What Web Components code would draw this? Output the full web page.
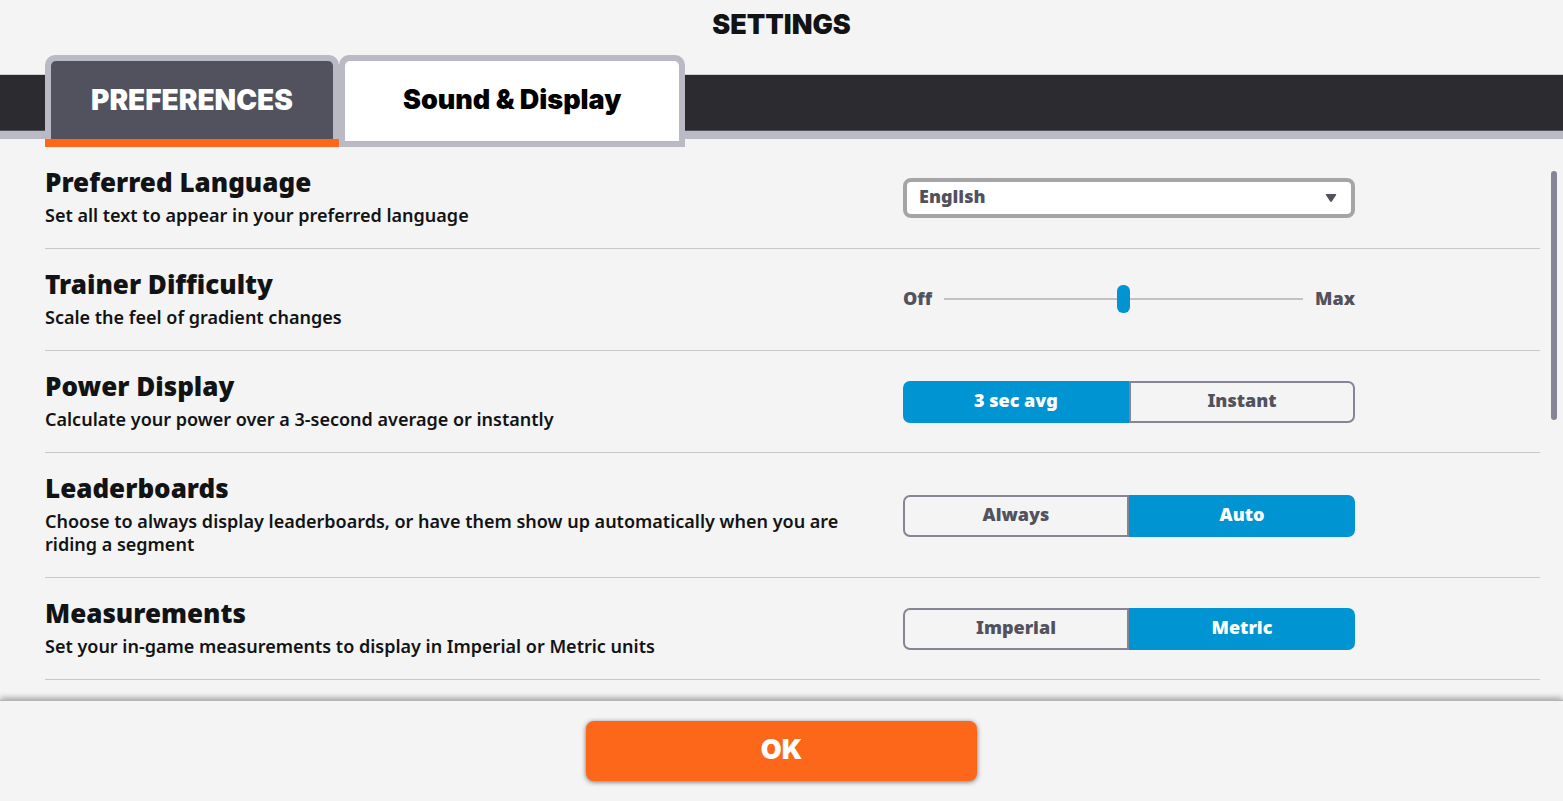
<!DOCTYPE html>
<html lang="en">
<head>
<meta charset="utf-8">
<title>Settings</title>
<style>
  :root {
    --surface: #f4f4f4; --ink: #121314; --slate: #52525e; --muted: #858595;
    --lavender: #babac5; --dark: #2c2b30; --orange: #fc6719; --blue: #0094d3; --rule: #c8c8c8;
    --display: Inter, "Noto Sans", sans-serif;
  }
  body { margin: 0; font-family: "Noto Sans", "Open Sans", sans-serif; color: var(--ink); background: var(--surface); }
</style>
</head>
<body>
<settings-page>
  <tab-bar slot="tabs">
    <tab-item selected>PREFERENCES</tab-item>
    <tab-item>Sound &amp; Display</tab-item>
  </tab-bar>
  <setting-row heading="Preferred Language" detail="Set all text to appear in your preferred language">
    <select-box label="Preferred Language" options="English,Français,Deutsch,Español"></select-box>
  </setting-row>
  <setting-row heading="Trainer Difficulty" detail="Scale the feel of gradient changes">
    <range-slider label="Trainer Difficulty" low="Off" high="Max"></range-slider>
  </setting-row>
  <setting-row heading="Power Display" detail="Calculate your power over a 3-second average or instantly">
    <segmented-control label="Power Display" options="3 sec avg,Instant" selected="0"></segmented-control>
  </setting-row>
  <setting-row heading="Leaderboards" detail="Choose to always display leaderboards, or have them show up automatically when you are riding a segment">
    <segmented-control label="Leaderboards" options="Always,Auto" selected="1"></segmented-control>
  </setting-row>
  <setting-row heading="Measurements" detail="Set your in-game measurements to display in Imperial or Metric units">
    <segmented-control label="Measurements" options="Imperial,Metric" selected="1"></segmented-control>
  </setting-row>
  <action-button slot="footer">OK</action-button>
</settings-page>

<script>
class BaseElement extends HTMLElement {
  connectedCallback() {
    if (this.shadowRoot) return;
    this.attachShadow({ mode: "open" }).innerHTML =
      `<style>*{box-sizing:border-box}${this.constructor.styles}</style>${this.render()}`;
    this.ready();
  }
  attr(name) { return this.getAttribute(name) || ""; }
  ready() {}
}

customElements.define("settings-page", class extends BaseElement {
  static styles = `
    :host { display: flex; flex-direction: column; height: 100vh; }
    h1 { margin: 0; height: 55px; font: 900 27px/50px var(--display); text-align: center; }
    main { flex: 1; min-height: 0; display: flex; }
    .list { flex: 1; padding-left: 45px; overflow-y: auto; scrollbar-width: none; }
    .rail { width: 23px; padding: 24px 6px 0 11px; }
    .thumb { height: 47%; border-radius: 3px; background: var(--muted); }
    footer { display: flex; justify-content: center; padding: 20px 0; z-index: 1;
      background: var(--surface); border-top: 1px solid #b4b4b4; box-shadow: 0 -2px 6px rgba(0,0,0,.35); }
    ::slotted([slot=footer]) { width: 25%; }
  `;
  render() {
    return `<h1>SETTINGS</h1><slot name="tabs"></slot>
      <main><div class="list"><slot></slot></div><div class="rail"><div class="thumb"></div></div></main>
      <footer><slot name="footer"></slot></footer>`;
  }
});

customElements.define("tab-bar", class extends BaseElement {
  static styles = `
    :host { display: block; }
    nav { display: flex; height: 92px; padding-left: 45px;
      background: linear-gradient(transparent 19px, #d0d0d2 19px 20px, var(--dark) 20px 75px, #52525e 75px 76px, var(--lavender) 76px 84px, transparent 84px); }
  `;
  render() { return `<nav role="tablist"><slot></slot></nav>`; }
});

customElements.define("tab-item", class extends BaseElement {
  static styles = `
    :host { display: flex; }
    button { display: flex; margin: 0; padding: 6px; border: 0; border-radius: 10px 10px 0 0;
      background: var(--lavender); font: 900 27px/32px var(--display); color: #000; }
    span { display: flex; align-items: center; padding: 0 58px 2px; border-radius: 5px 5px 0 0; background: #fff; }
    :host([selected]) button { padding-bottom: 0; border-bottom: 8px solid var(--orange); font-size: 28px; color: #fff; }
    :host([selected]) span { padding: 0 40px; background: var(--slate); }
  `;
  render() {
    return `<button role="tab" aria-selected="${this.hasAttribute("selected")}"><span><slot></slot></span></button>`;
  }
});

customElements.define("setting-row", class extends BaseElement {
  static styles = `
    :host { display: grid; grid-template-columns: 858fr 452fr 185fr; align-items: center;
      padding: 22px 0 21px; border-bottom: 1px solid var(--rule); }
    .text { padding-right: 20px; }
    h2 { margin: 0 0 9px; font-size: 26px; line-height: 26px; font-weight: 900; }
    p { margin: 0; font-size: 18px; line-height: 23px; font-weight: 600; }
  `;
  render() {
    return `<div class="text"><h2>${this.attr("heading")}</h2><p>${this.attr("detail")}</p></div><slot></slot>`;
  }
});

customElements.define("select-box", class extends BaseElement {
  static styles = `
    :host { display: grid; align-items: center; }
    select, svg { grid-area: 1 / 1; }
    select { appearance: none; width: 100%; height: 40px; margin: 0; padding: 0 12px 5px; border: 4px solid #a5a5a7;
      border-radius: 8px; background: #fff; color: var(--slate); font: 900 18px/24px "Noto Sans", sans-serif; }
    svg { justify-self: end; margin-right: 18px; pointer-events: none; }
  `;
  render() {
    return `<select aria-label="${this.attr("label")}">${this.attr("options").split(",").map(o => `<option>${o}</option>`).join("")}</select>
      <svg width="12" height="10" viewBox="0 0 12 10"><path d="M1.4 1h9.2q1 0 .5 1L7 8.3q-1 1.2-2 0L.9 2q-.5-1 .5-1z" fill="#52525e"/></svg>`;
  }
});

customElements.define("range-slider", class extends BaseElement {
  static styles = `
    :host { display: flex; align-items: center; gap: 12px; padding-bottom: 2px; font-size: 18px; line-height: 24px; font-weight: 900; color: var(--slate); }
    span { padding-bottom: 2px; }
    input { appearance: none; flex: 1; min-width: 0; height: 30px; margin: 0; background: none; }
    input::-webkit-slider-runnable-track { height: 2px; background: #c2c2c6; }
    input::-webkit-slider-thumb { appearance: none; width: 13px; height: 28px; margin-top: -13px; border-radius: 6px; background: var(--blue); }
  `;
  render() {
    return `<span>${this.attr("low")}</span><input type="range" min="0" max="100" value="50" aria-label="${this.attr("label")}"><span>${this.attr("high")}</span>`;
  }
});

customElements.define("segmented-control", class extends BaseElement {
  static styles = `
    :host { display: block; }
    .group { display: grid; grid-template-columns: 1fr 1fr; }
    button { height: 42px; margin: 0; padding: 0 0 4px; border: 2px solid var(--muted); background: none;
      color: var(--slate); font: 900 18px/24px "Noto Sans", sans-serif; }
    button:first-child { border-radius: 7px 0 0 7px; }
    button:last-child { border-radius: 0 7px 7px 0; }
    button[aria-pressed=true] { border-color: var(--blue); background: var(--blue); color: #fff; }
  `;
  render() {
    const on = Number(this.attr("selected"));
    return `<div class="group" role="group" aria-label="${this.attr("label")}">${this.attr("options").split(",")
      .map((o, i) => `<button aria-pressed="${i === on}">${o}</button>`).join("")}</div>`;
  }
  ready() {
    const buttons = [...this.shadowRoot.querySelectorAll("button")];
    buttons.forEach(b => b.addEventListener("click", () =>
      buttons.forEach(x => x.setAttribute("aria-pressed", x === b))));
  }
});

customElements.define("action-button", class extends BaseElement {
  static styles = `
    :host { display: block; }
    button { width: 100%; height: 60px; margin: 0; padding: 0 0 3px; border: 0; border-radius: 8px;
      background: var(--orange); box-shadow: 0 1px 5px rgba(0,0,0,.55); color: #fff; font: 900 27px/32px var(--display); }
  `;
  render() { return `<button><slot></slot></button>`; }
});
</script>
</body>
</html>
